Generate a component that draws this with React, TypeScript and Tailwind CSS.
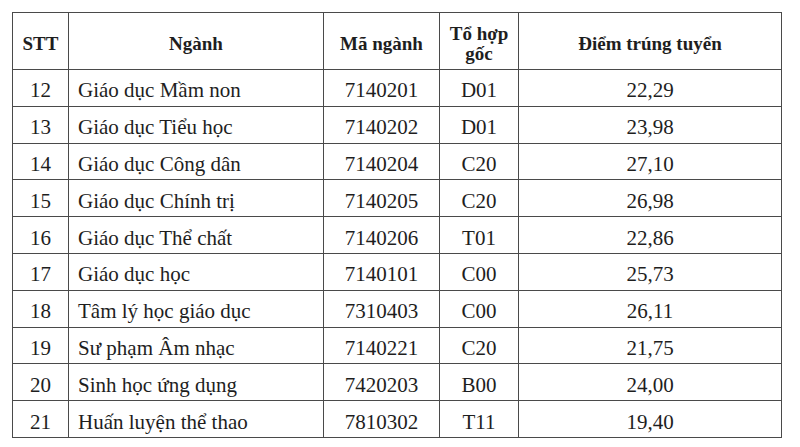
import React from 'react';

interface Row {
  stt: number;
  nganh: string;
  ma: string;
  toHop: string;
  diem: string;
}

const rows: Row[] = [
  { stt: 12, nganh: 'Giáo dục Mầm non', ma: '7140201', toHop: 'D01', diem: '22,29' },
  { stt: 13, nganh: 'Giáo dục Tiểu học', ma: '7140202', toHop: 'D01', diem: '23,98' },
  { stt: 14, nganh: 'Giáo dục Công dân', ma: '7140204', toHop: 'C20', diem: '27,10' },
  { stt: 15, nganh: 'Giáo dục Chính trị', ma: '7140205', toHop: 'C20', diem: '26,98' },
  { stt: 16, nganh: 'Giáo dục Thể chất', ma: '7140206', toHop: 'T01', diem: '22,86' },
  { stt: 17, nganh: 'Giáo dục học', ma: '7140101', toHop: 'C00', diem: '25,73' },
  { stt: 18, nganh: 'Tâm lý học giáo dục', ma: '7310403', toHop: 'C00', diem: '26,11' },
  { stt: 19, nganh: 'Sư phạm Âm nhạc', ma: '7140221', toHop: 'C20', diem: '21,75' },
  { stt: 20, nganh: 'Sinh học ứng dụng', ma: '7420203', toHop: 'B00', diem: '24,00' },
  { stt: 21, nganh: 'Huấn luyện thể thao', ma: '7810302', toHop: 'T11', diem: '19,40' },
];

const App: React.FC = () => {
  const th = 'border border-[#4a4a4a] font-bold text-[19px] leading-[20px] text-center align-middle pt-[5px] p-0';
  const td = 'border border-[#4a4a4a] text-[21px] leading-[24px] text-center align-middle pt-[5px] p-0';

  return (
    <div className="w-[800px] h-[447px] bg-white pt-[12px] pl-[12px] text-[#1e1e1e] font-['Liberation_Serif','Times_New_Roman',serif]">
      <table className="border-collapse w-[769px] table-fixed">
        <colgroup>
          <col className="w-[56px]" />
          <col className="w-[255px]" />
          <col className="w-[116px]" />
          <col className="w-[79px]" />
          <col className="w-[263px]" />
        </colgroup>
        <thead>
          <tr className="h-[57px]">
            <th className={th}>STT</th>
            <th className={th}>Ngành</th>
            <th className={th}>Mã ngành</th>
            <th className={th}>
              Tổ hợp
              <br />
              gốc
            </th>
            <th className={th}>Điểm trúng tuyển</th>
          </tr>
        </thead>
        <tbody>
          {rows.map((r) => (
            <tr key={r.stt} className="h-[36.8px]">
              <td className={td}>{r.stt}</td>
              <td className={`${td} !text-left !pl-[9px]`}>{r.nganh}</td>
              <td className={td}>{r.ma}</td>
              <td className={td}>{r.toHop}</td>
              <td className={td}>{r.diem}</td>
            </tr>
          ))}
        </tbody>
      </table>
    </div>
  );
};

export default App;
